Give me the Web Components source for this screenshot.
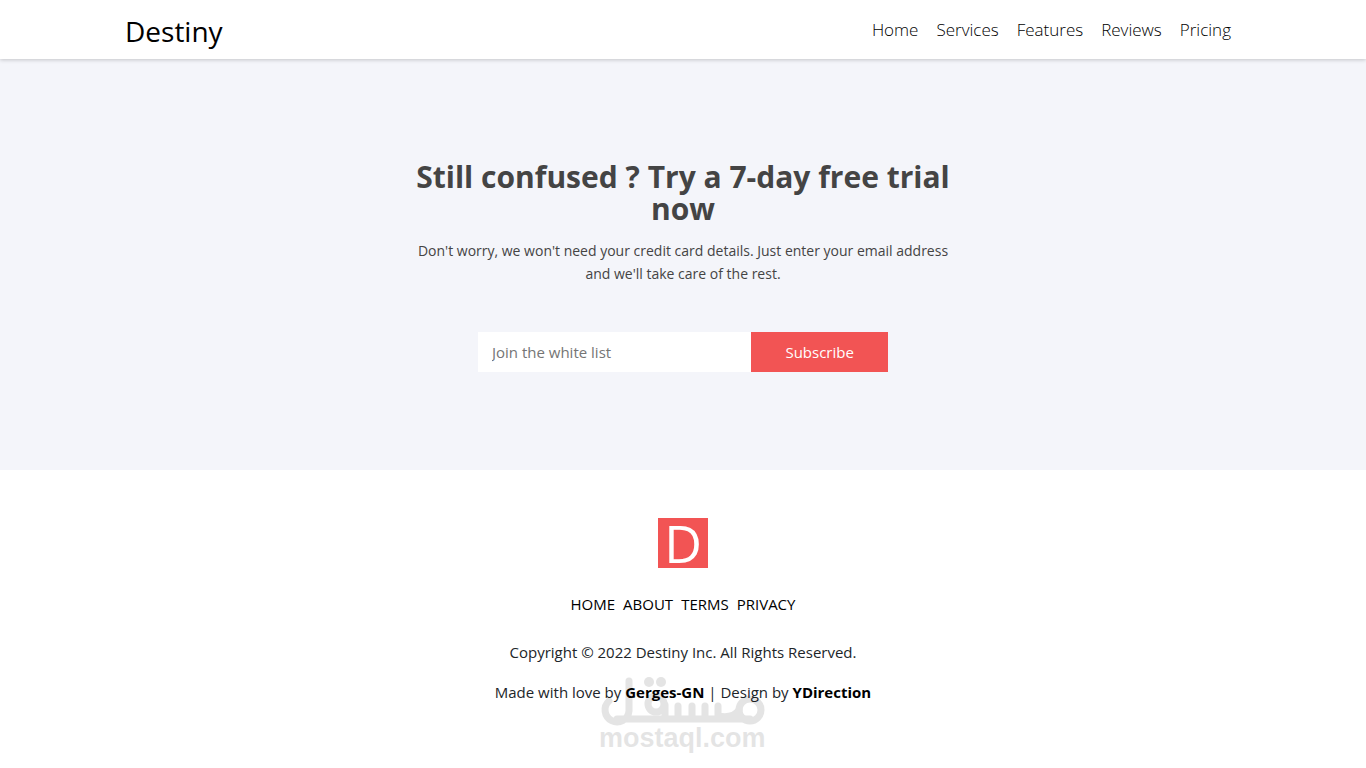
<!DOCTYPE html>
<html lang="en"><head><meta charset="utf-8"><title>Destiny</title>
<style>
body{margin:0;min-height:100vh;background:#fff;color:#212529;font:15px/24px "Open Sans","Noto Sans",sans-serif}
</style></head><body>
<site-header></site-header>
<main><trial-section>
<span slot="title">Still confused ? Try a 7-day free trial now</span>
<span slot="text">Don't worry, we won't need your credit card details. Just enter your email address and we'll take care of the rest.</span>
</trial-section></main>
<site-footer></site-footer>
<script>
const define=(name,html)=>customElements.define(name,class extends HTMLElement{
  constructor(){super();const t=document.createElement('template');t.innerHTML=html;
    this.attachShadow({mode:'open'}).append(t.content.cloneNode(true));}
});
define('site-header',`<style>
:host{display:block;position:relative;z-index:1;background:#fff;box-shadow:0 1px 4px rgba(0,0,0,.2)}
.bar{display:flex;align-items:center;justify-content:space-between;box-sizing:border-box;max-width:1140px;min-height:59px;margin:0 auto;padding:0 12px}
a{color:#000;text-decoration:none}
.brand{font-size:28px;line-height:40px;padding-top:2px}
nav{display:flex;gap:18px;padding-right:10px;font-size:17px;font-weight:300}
</style><header class="bar"><a class="brand" href="#">Destiny</a>
<nav aria-label="Main"><a href="#">Home</a><a href="#">Services</a><a href="#">Features</a><a href="#">Reviews</a><a href="#">Pricing</a></nav></header>`);
define('subscribe-form',`<style>
:host{display:block;width:100%;max-width:410px}
form{display:grid;grid-template-columns:2fr 1fr;height:40px}
input,button{font:inherit;border:0;border-radius:0;margin:0;min-width:0}
input{padding:0 14px;background:#fff;color:#444}
input::placeholder{color:#757575;opacity:1}
button{background:#f25454;color:#fff;padding:0}
</style><form><input type="email" aria-label="Email address" placeholder="Join the white list"><button type="button">Subscribe</button></form>`);
define('trial-section',`<style>
:host{display:flex;flex-direction:column;align-items:center;background:#f4f5fa;color:#444;padding:102px 16px 98px;text-align:center}
h1{font-size:30px;line-height:32px;font-weight:700;margin:0 0 14px;max-width:546px}
p{font-size:14px;line-height:23px;margin:0 0 47px;max-width:546px}
</style><h1><slot name="title"></slot></h1><p><slot name="text"></slot></p><subscribe-form></subscribe-form>`);
define('mostaql-mark',`<style>
:host{display:block;width:168px;color:#000;opacity:.1;pointer-events:none}
svg{display:block}
</style><svg width="168" height="82" viewBox="600 674 168 82" aria-hidden="true">
<g fill="none" stroke="currentColor" stroke-width="7" stroke-linecap="round" stroke-linejoin="round"><path d="M609 701A12 12 0 1 0 629 711V681M617 719H750M665 705V719M678 706V719M692 706V719M705 706V719M718 706V719M718 716Q733 719 739 710"/><circle cx="656" cy="704" r="8"/><circle cx="750" cy="710" r="11"/></g>
<circle cx="649" cy="682" r="5" fill="currentColor"/><circle cx="661" cy="682" r="5" fill="currentColor"/>
<text x="599" y="747" font-family="Liberation Sans,sans-serif" font-weight="700" font-size="27" fill="currentColor">mostaql.com</text></svg>`);
define('site-footer',`<style>
:host{display:block;position:relative;padding:48px 16px 48px;text-align:center}
footer{display:flex;flex-direction:column;align-items:center}
.logo{display:block;width:50px;height:50px;background:#f25454;color:#fff;font-size:52px;line-height:50px}
nav{display:flex;gap:8px;margin:24px 0}
a{color:#000;text-decoration:none}
p{margin:0 0 16px}
b{color:#000}
mostaql-mark{position:absolute;top:204px;left:50%;margin-left:-83px}
</style><footer><span class="logo">D</span>
<nav aria-label="Footer"><a href="#">HOME</a><a href="#">ABOUT</a><a href="#">TERMS</a><a href="#">PRIVACY</a></nav>
<p>Copyright © 2022 Destiny Inc. All Rights Reserved.</p>
<p>Made with love by <a href="#"><b>Gerges-GN</b></a> | Design by <a href="#"><b>YDirection</b></a></p></footer>
<mostaql-mark></mostaql-mark>`);
</script></body></html>
